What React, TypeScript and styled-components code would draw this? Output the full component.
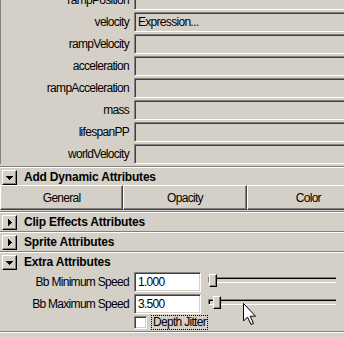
import styled, { createGlobalStyle } from "styled-components";

const GlobalStyle = createGlobalStyle`
  html, body {
    margin: 0;
    padding: 0;
    overflow: hidden;
    background: #d4d0c8;
  }
`;

type Attr = { name: string; value?: string };

const dynamicAttrs: Attr[] = [
  { name: "rampPosition" },
  { name: "velocity", value: "Expression..." },
  { name: "rampVelocity" },
  { name: "acceleration" },
  { name: "rampAcceleration" },
  { name: "mass" },
  { name: "lifespanPP" },
  { name: "worldVelocity" },
];

const speeds = [
  { name: "Bb Minimum Speed", value: "1.000", thumb: 1 },
  { name: "Bb Maximum Speed", value: "3.500", thumb: 5 },
];

export default function App() {
  return (
    <Panel>
      <GlobalStyle />

      <AttrList>
        {dynamicAttrs.map((a) => (
          <AttrRow key={a.name}>
            <Label>{a.name}</Label>
            <Field>{a.value}</Field>
          </AttrRow>
        ))}
      </AttrList>

      <Etch $top={2} />
      <FrameHeader>
        <ArrowButton>
          <TriDown />
        </ArrowButton>
        <HeaderTitle>Add Dynamic Attributes</HeaderTitle>
      </FrameHeader>
      <ButtonRow>
        <PushButton>General</PushButton>
        <PushButton>Opacity</PushButton>
        <PushButton>Color</PushButton>
      </ButtonRow>

      <Etch />
      <FrameHeader>
        <ArrowButton>
          <TriRight />
        </ArrowButton>
        <HeaderTitle>Clip Effects Attributes</HeaderTitle>
      </FrameHeader>

      <Etch />
      <FrameHeader>
        <ArrowButton>
          <TriRight />
        </ArrowButton>
        <HeaderTitle>Sprite Attributes</HeaderTitle>
      </FrameHeader>

      <Etch />
      <FrameHeader>
        <ArrowButton>
          <TriDown />
        </ArrowButton>
        <HeaderTitle>Extra Attributes</HeaderTitle>
      </FrameHeader>

      <ExtraBody>
        {speeds.map((s) => (
          <SpeedRow key={s.name}>
            <Label>{s.name}</Label>
            <Field $white>{s.value}</Field>
            <Slider>
              <Track />
              <Thumb $left={s.thumb} />
            </Slider>
          </SpeedRow>
        ))}
        <CheckRow>
          <CheckBox />
          <FocusLabel>Depth Jitter</FocusLabel>
        </CheckRow>
      </ExtraBody>
      <Etch />

      <Cursor width="14" height="23" viewBox="0 0 14 23">
        <path
          d="M0.5 0.5 L0.5 18 L4.5 14 L8 21.5 L10.5 20.5 L7.2 13.2 L12.5 13.2 Z"
          fill="#fff"
          stroke="#000"
          strokeWidth="1"
          strokeLinejoin="miter"
        />
      </Cursor>
    </Panel>
  );
}

function TriDown() {
  return (
    <svg width="7" height="4" viewBox="0 0 7 4" shapeRendering="crispEdges">
      <path d="M0 0h7v1H0zM1 1h5v1H1zM2 2h3v1H2zM3 3h1v1H3z" fill="#000" />
    </svg>
  );
}

function TriRight() {
  return (
    <svg width="4" height="7" viewBox="0 0 4 7" shapeRendering="crispEdges">
      <path d="M0 0h1v7H0zM1 1h1v5H1zM2 2h1v3H2zM3 3h1v1H3z" fill="#000" />
    </svg>
  );
}

/* ---------------- styles ---------------- */

const Panel = styled.div`
  position: relative;
  width: 370px;
  height: 337px;
  overflow: hidden;
  background: #d4d0c8;
  color: #000;
  font-family: "Liberation Sans", Arial, sans-serif;
  font-size: 12px;
  letter-spacing: -0.7px;
`;

const AttrList = styled.div`
  display: flex;
  flex-direction: column;
  gap: 2px;
  margin-top: -10px;
  border-left: 1px solid #808080;
`;

const AttrRow = styled.div`
  display: grid;
  grid-template-columns: 128px 1fr;
  column-gap: 5px;
  height: 20px;
`;

const Label = styled.div`
  height: 20px;
  line-height: 20px;
  text-align: right;
  white-space: nowrap;
`;

const Field = styled.div<{ $white?: boolean }>`
  box-sizing: border-box;
  height: 20px;
  line-height: 18px;
  padding: 0 3px;
  background: ${(p) => (p.$white ? "#fff" : "#d4d0c8")};
  border: 1px solid;
  border-color: #808080 #fff #fff #808080;
  box-shadow: inset 1px 1px #404040, inset -1px -1px #d4d0c8;
  white-space: nowrap;
  overflow: hidden;
`;

const Etch = styled.div<{ $top?: number }>`
  height: 0;
  margin: ${(p) => p.$top ?? 1}px 0 1px;
  border-top: 1px solid #808080;
  border-bottom: 1px solid #fff;
`;

const FrameHeader = styled.div`
  box-sizing: border-box;
  display: flex;
  align-items: center;
  gap: 7px;
  height: 16px;
  padding: 1px 0 0 2px;
`;

const ArrowButton = styled.div`
  box-sizing: border-box;
  flex: none;
  display: flex;
  align-items: center;
  justify-content: center;
  width: 15px;
  height: 15px;
  background: #d4d0c8;
  border: 1px solid;
  border-color: #fff #000 #000 #fff;
  box-shadow: inset -1px -1px #808080;
  svg {
    display: block;
  }
`;

const HeaderTitle = styled.span`
  font-weight: bold;
  letter-spacing: -0.2px;
  line-height: 15px;
  white-space: nowrap;
`;

const ButtonRow = styled.div`
  display: grid;
  grid-template-columns: repeat(3, 1fr);
  height: 25px;
`;

const PushButton = styled.div`
  box-sizing: border-box;
  display: flex;
  align-items: center;
  justify-content: center;
  height: 25px;
  background: #d4d0c8;
  border: 1px solid;
  border-color: #fff #404040 #404040 #fff;
  box-shadow: inset -1px -1px #808080;
`;

const ExtraBody = styled.div`
  display: flex;
  flex-direction: column;
  gap: 2px;
  padding-top: 2px;
`;

const SpeedRow = styled.div`
  display: grid;
  grid-template-columns: 129px 67px 130px;
  column-gap: 5px;
  height: 20px;
`;

const Slider = styled.div`
  position: relative;
  margin-left: 2px;
`;

const Track = styled.div`
  position: absolute;
  left: 0;
  right: 0;
  top: 5px;
  height: 4px;
  border-top: 1px solid #808080;
  border-left: 1px solid #808080;
  border-bottom: 1px solid #fff;
  box-shadow: inset 1px 1px #000;
`;

const Thumb = styled.div<{ $left: number }>`
  position: absolute;
  top: 2px;
  left: ${(p) => p.$left}px;
  box-sizing: border-box;
  width: 8px;
  height: 13px;
  background: #d4d0c8;
  border: 1px solid;
  border-color: #fff #000 #000 #fff;
  box-shadow: inset -1px -1px #808080;
`;

const CheckRow = styled.div`
  display: flex;
  align-items: center;
  gap: 4px;
  height: 15px;
  margin: -1px 0 0 134px;
`;

const CheckBox = styled.div`
  box-sizing: border-box;
  width: 13px;
  height: 13px;
  background: #fff;
  border: 1px solid;
  border-color: #808080 #fff #fff #808080;
  box-shadow: inset 1px 1px #404040, inset -1px -1px #d4d0c8;
`;

const FocusLabel = styled.span`
  box-sizing: border-box;
  height: 15px;
  line-height: 13px;
  padding: 0 1px;
  border: 1px dotted #000;
  white-space: nowrap;
`;

const Cursor = styled.svg`
  position: absolute;
  left: 243px;
  top: 303px;
`;
